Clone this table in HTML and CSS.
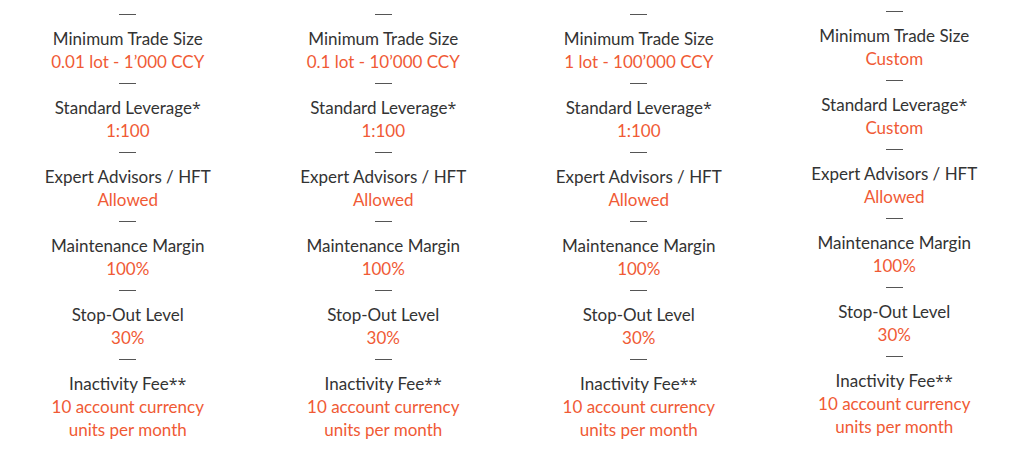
FILE: index.html
```html
<!DOCTYPE html>
<html>
<head>
<meta charset="utf-8">
<link rel="stylesheet" href="styles.css">
</head>
<body>
<div class="grid">
  <div class="col">
    <div class="dash"></div><div class="label">Minimum Trade Size</div><div class="value">0.01 lot - 1’000 CCY</div>
    <div class="dash"></div><div class="label">Standard Leverage<span class="ast">*</span></div><div class="value">1:100</div>
    <div class="dash"></div><div class="label">Expert Advisors / HFT</div><div class="value">Allowed</div>
    <div class="dash"></div><div class="label">Maintenance Margin</div><div class="value">100%</div>
    <div class="dash"></div><div class="label">Stop-Out Level</div><div class="value">30%</div>
    <div class="dash"></div><div class="label">Inactivity Fee<span class="ast">**</span></div><div class="value">10 account currency<br>units per month</div>
  </div>
  <div class="col">
    <div class="dash"></div><div class="label">Minimum Trade Size</div><div class="value">0.1 lot - 10’000 CCY</div>
    <div class="dash"></div><div class="label">Standard Leverage<span class="ast">*</span></div><div class="value">1:100</div>
    <div class="dash"></div><div class="label">Expert Advisors / HFT</div><div class="value">Allowed</div>
    <div class="dash"></div><div class="label">Maintenance Margin</div><div class="value">100%</div>
    <div class="dash"></div><div class="label">Stop-Out Level</div><div class="value">30%</div>
    <div class="dash"></div><div class="label">Inactivity Fee<span class="ast">**</span></div><div class="value">10 account currency<br>units per month</div>
  </div>
  <div class="col">
    <div class="dash"></div><div class="label">Minimum Trade Size</div><div class="value">1 lot - 100’000 CCY</div>
    <div class="dash"></div><div class="label">Standard Leverage<span class="ast">*</span></div><div class="value">1:100</div>
    <div class="dash"></div><div class="label">Expert Advisors / HFT</div><div class="value">Allowed</div>
    <div class="dash"></div><div class="label">Maintenance Margin</div><div class="value">100%</div>
    <div class="dash"></div><div class="label">Stop-Out Level</div><div class="value">30%</div>
    <div class="dash"></div><div class="label">Inactivity Fee<span class="ast">**</span></div><div class="value">10 account currency<br>units per month</div>
  </div>
  <div class="col col-last">
    <div class="dash"></div><div class="label">Minimum Trade Size</div><div class="value">Custom</div>
    <div class="dash"></div><div class="label">Standard Leverage<span class="ast">*</span></div><div class="value">Custom</div>
    <div class="dash"></div><div class="label">Expert Advisors / HFT</div><div class="value">Allowed</div>
    <div class="dash"></div><div class="label">Maintenance Margin</div><div class="value">100%</div>
    <div class="dash"></div><div class="label">Stop-Out Level</div><div class="value">30%</div>
    <div class="dash"></div><div class="label">Inactivity Fee<span class="ast">**</span></div><div class="value">10 account currency<br>units per month</div>
  </div>
</div>
</body>
</html>
```

FILE: styles.css
```css
html, body {
  margin: 0;
  padding: 0;
  background: #ffffff;
}
body {
  font-family: Lato, "Open Sans", sans-serif;
  font-size: 17px;
  line-height: 23px;
  color: #333333;
}
.grid {
  display: grid;
  grid-template-columns: repeat(4, 1fr);
  width: 1022px;
}
.col {
  display: flex;
  flex-direction: column;
  align-items: center;
  text-align: center;
  padding-top: 4px;
}
.col-last {
  padding-top: 1px;
}
.dash {
  width: 17px;
  height: 23px;
  background: linear-gradient(#555, #555) center 10px / 17px 1px no-repeat;
}
.label {
  color: #333333;
  height: 23px;
}
.ast {
  font-family: "Open Sans", sans-serif;
  font-size: 16px;
  line-height: 0;
}
.value {
  color: #f05a35;
}
```
